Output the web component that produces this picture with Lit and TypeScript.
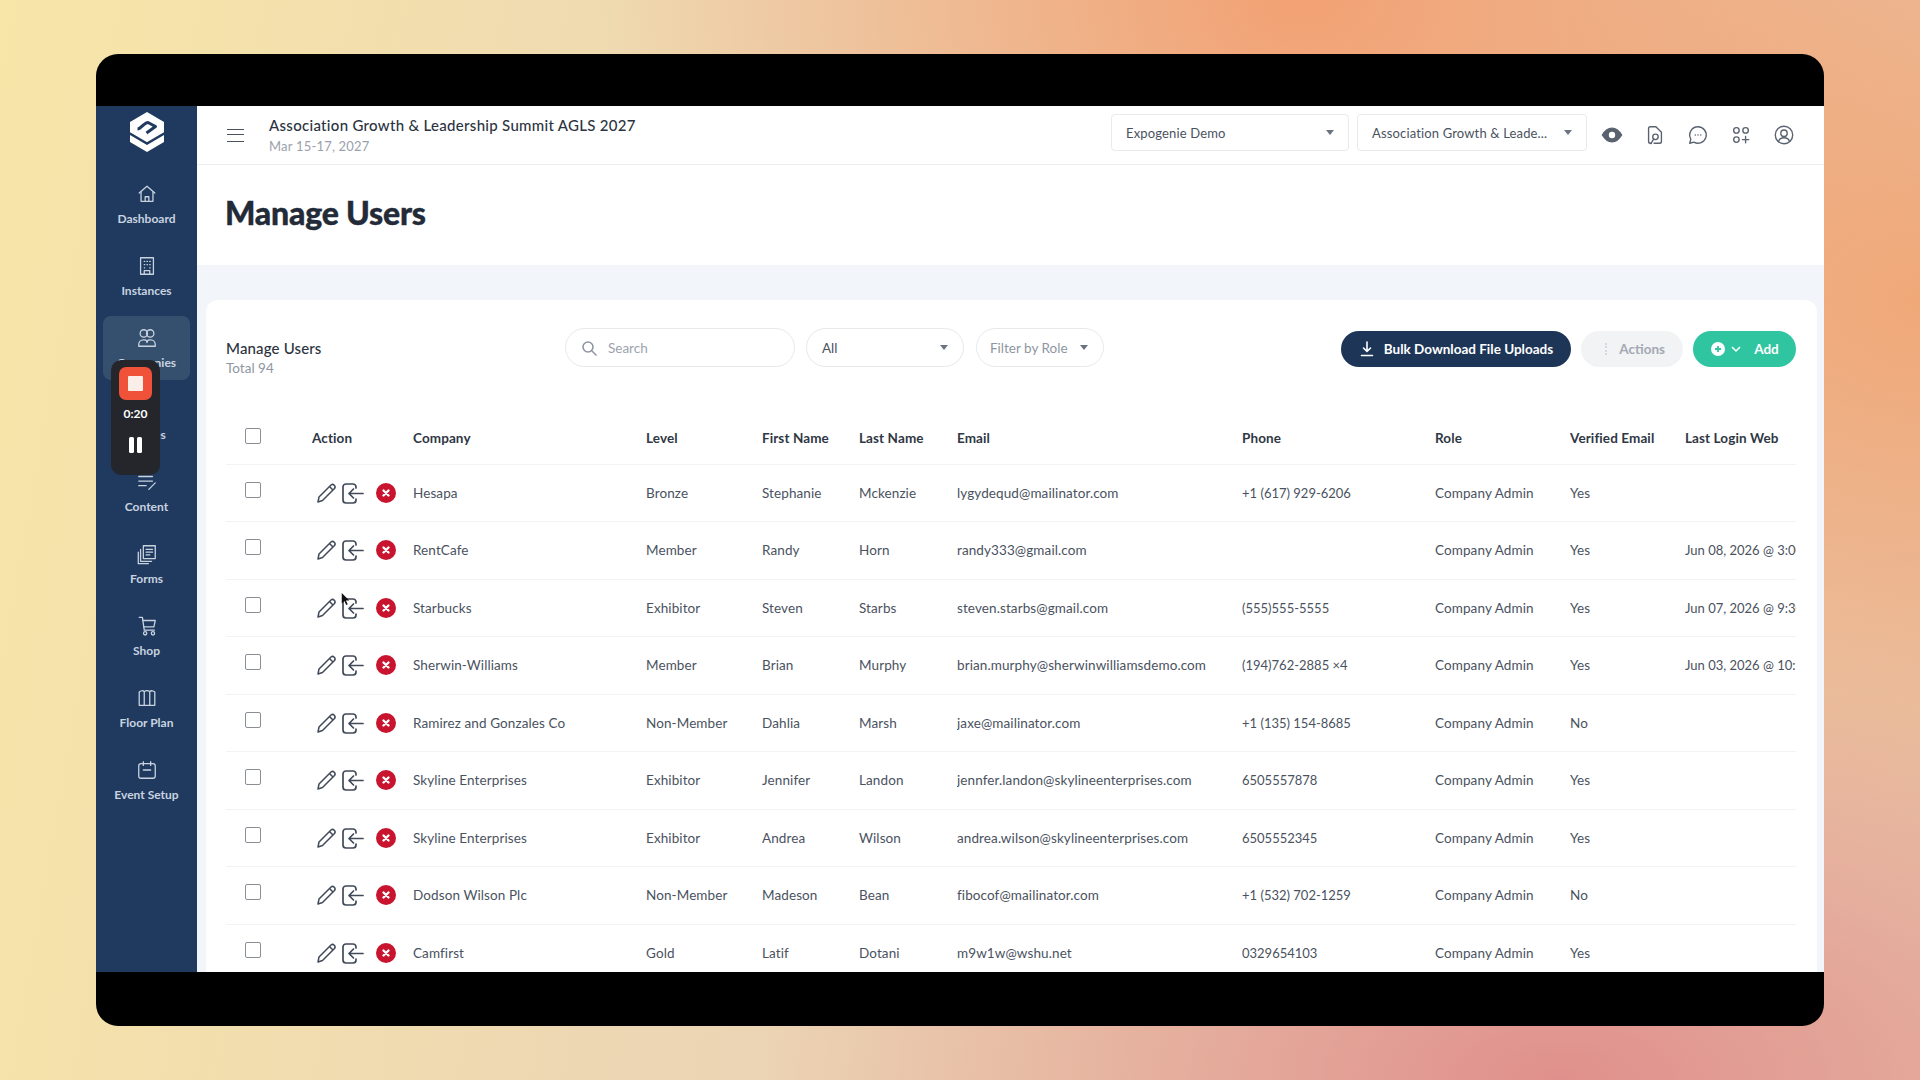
import { LitElement, html, css, svg } from "lit";
import { customElement } from "lit/decorators.js";

const rows = [
  ["Hesapa","Bronze","Stephanie","Mckenzie","lygydequd@mailinator.com","+1 (617) 929-6206","Company Admin","Yes",""],
  ["RentCafe","Member","Randy","Horn","randy333@gmail.com","","Company Admin","Yes","Jun 08, 2026 @ 3:00 PM"],
  ["Starbucks","Exhibitor","Steven","Starbs","steven.starbs@gmail.com","(555)555-5555","Company Admin","Yes","Jun 07, 2026 @ 9:30 AM"],
  ["Sherwin-Williams","Member","Brian","Murphy","brian.murphy@sherwinwilliamsdemo.com","(194)762-2885 ×4","Company Admin","Yes","Jun 03, 2026 @ 10:15 AM"],
  ["Ramirez and Gonzales Co","Non-Member","Dahlia","Marsh","jaxe@mailinator.com","+1 (135) 154-8685","Company Admin","No",""],
  ["Skyline Enterprises","Exhibitor","Jennifer","Landon","jennfer.landon@skylineenterprises.com","6505557878","Company Admin","Yes",""],
  ["Skyline Enterprises","Exhibitor","Andrea","Wilson","andrea.wilson@skylineenterprises.com","6505552345","Company Admin","Yes",""],
  ["Dodson Wilson Plc","Non-Member","Madeson","Bean","fibocof@mailinator.com","+1 (532) 702-1259","Company Admin","No",""],
  ["Camfirst","Gold","Latif","Dotani","m9w1w@wshu.net","0329654103","Company Admin","Yes",""],
];
const heads = ["Company","Level","First Name","Last Name","Email","Phone","Role","Verified Email","Last Login Web"];
const widths = [86,101,233,116,97,98,285,193,135,115,111];

const navIcons: Record<string, unknown> = {
  home: svg`<path d="M3.5 11 12 3.5 20.5 11"/><path d="M5.5 9.5V20h13V9.5"/><path d="M10 20v-5h4v5"/>`,
  building: svg`<path d="M5 3h14v18H5z"/><path d="M9 7h.5M12 7h.5M15 7h.5M9 10.500h.5M12 10.500h.5M15 10.500h.5M9 14h.5M15 14h.5"/><path d="M9 21v-4h6v4"/>`,
  people: svg`<circle cx="8.500" cy="7" r="4"/><circle cx="15.500" cy="7" r="4"/><path d="M3 21v-2a5 5 0 0 1 5-5h1a3 3 0 0 1 3 3 3 3 0 0 1 3-3h1a5 5 0 0 1 5 5v2z"/>`,
  badge: svg`<path d="M4 5h16v14H4z"/><path d="M8 10h8M8 14h8"/>`,
  content: svg`<path d="M3 6h15M3 11h15M3 16h8"/><path d="m14 20 7-7"/>`,
  forms: svg`<path d="M8 3h13v14H8z"/><path d="M11 7h7M11 10h7M11 13h4"/><path d="M5 7v13h12M2.500 10v12.500h11"/>`,
  cart: svg`<path d="M3.500 2.500h3.500L9 16.500h11"/><path d="M7.500 6H21l-1.500 7H8.500"/><circle cx="10" cy="20" r="1.800"/><circle cx="18.500" cy="20" r="1.800"/>`,
  map: svg`<path d="M3.500 5.500C5 4 7.500 3.500 9 5c1.500-1.500 4.500-1.500 6 0 1.500-1.500 4-1 5.500.5V20H3.500z"/><path d="M9 5v15M15 5v15"/>`,
  calendar: svg`<rect x="3" y="5" width="18" height="16" rx="2.500"/><path d="M8 3v4M16 3v4M8 12h8"/>`,
};

const nav: [string, string, boolean?][] = [
  ["home","Dashboard"],["building","Instances"],["people","Companies",true],["badge","Badges"],
  ["content","Content"],["forms","Forms"],["cart","Shop"],["map","Floor Plan"],["calendar","Event Setup"],
];

const caret = html`<svg class="caret" viewBox="0 0 8 5"><path d="M0 0h8L4 5z" fill="currentColor"/></svg>`;

@customElement("app-root")
export class AppRoot extends LitElement {
  static styles = css`
    :host { display: block; width: 1920px; height: 1080px; overflow: hidden; position: relative;
      font-family: "Lato", "Open Sans", sans-serif; color: #2b3340;
      background:
        radial-gradient(700px 480px at 1300px 0px, #f2a173 0%, rgba(242,161,115,0) 100%),
        radial-gradient(800px 420px at 1560px 1080px, #e0908c 0%, rgba(224,144,140,0) 100%),
        radial-gradient(800px 600px at 1920px 300px, #f0a878 0%, rgba(240,168,120,0) 100%),
        linear-gradient(100deg, #f7e6a8 0%, #ecd6b4 40%, #e8c4aa 100%); }
    * { box-sizing: border-box; }
    .window { position: absolute; inset: 54px 96px; background: #000; border-radius: 22px; padding: 52px 0 54px; }
    .app { display: flex; height: 100%; background: #f2f5f9; overflow: hidden; }
    .side { width: 101px; flex: none; background: #1f3a5e; display: flex; flex-direction: column; align-items: center; padding-top: 6px; }
    .logo { width: 34px; height: 40px; margin-bottom: 20px; }
    .nav { width: 87px; height: 64px; margin-bottom: 8px; border-radius: 8px; display: flex; flex-direction: column; align-items: center; justify-content: flex-start; padding-top: 11px; gap: 7px; color: #c9d3e0; font-size: 12px; line-height: 14px; font-weight: 700; white-space: nowrap; }
    .nav.on { background: #35506f; }
    .nav svg { width: 22px; height: 22px; fill: none; stroke: currentColor; stroke-width: 1.400; stroke-linejoin: round; stroke-linecap: round; flex: none; }
    .main { flex: 1; min-width: 0; display: flex; flex-direction: column; }
    .top { height: 59px; background: #fff; border-bottom: 1px solid #eceef1; display: flex; align-items: center; padding: 0 29px 0 30px; flex: none; }
    .burger { width: 17px; height: 13px; border-top: 1.500px solid #4a5260; border-bottom: 1.500px solid #4a5260; position: relative; margin-right: 25px; }
    .burger::after { content: ""; position: absolute; left: 0; right: 0; top: 4px; border-top: 1.500px solid #4a5260; }
    .event { flex: 1; }
    .event b { display: block; font-weight: 500; font-size: 15px; line-height: 20px; color: #2b3340; letter-spacing: .3px; }
    .event span { display: block; font-size: 13px; line-height: 18px; margin-top: 2px; color: #9aa1ac; letter-spacing: .2px; }
    .sel { height: 37px; margin-top: -5px; border: 1px solid #e8eaee; border-radius: 4px; display: flex; align-items: center; justify-content: space-between; font-size: 13px; letter-spacing: .15px; color: #4a5260; padding: 0 14px; background: #fff; }
    .caret { width: 8px; height: 5px; color: #6b7280; flex: none; }
    .s1 { width: 238px; margin-right: 8px; }
    .s2 { width: 230px; margin-right: 14px; }
    .ticons { display: flex; gap: 21px; color: #5a6270; }
    .ticons svg { width: 22px; height: 22px; fill: none; stroke: currentColor; stroke-width: 1.500; stroke-linecap: round; stroke-linejoin: round; display: block; }
    .head { height: 100px; background: #fff; flex: none; padding: 0 28px; display: flex; align-items: center; padding-bottom: 6px; }
    h1 { margin: 0; font-size: 32px; font-weight: 900; color: #232b38; letter-spacing: -.2px; -webkit-text-stroke: .4px #232b38; }
    .card { flex: 1; min-height: 0; margin: 35px 7px 0 9px; background: #fff; border-radius: 12px 12px 0 0; padding: 0 21px 0 20px; overflow: hidden; }
    .bar { display: flex; align-items: center; height: 95px; }
    .ttl { width: 339px; flex: none; padding-top: 20px; }
    .ttl b { display: block; font-weight: 500; font-size: 15px; line-height: 20px; color: #2b3340; letter-spacing: .15px; }
    .ttl span { display: block; font-size: 13.500px; line-height: 20px; color: #8f96a1; }
    .pill { height: 39px; border: 1px solid #e6e8ec; border-radius: 20px; display: flex; align-items: center; font-size: 13.500px; color: #9ca3af; background: #fff; }
    .search { width: 230px; padding-left: 15px; gap: 11px; margin-right: 11px; }
    .search svg { width: 16px; height: 16px; fill: none; stroke: #8f96a1; stroke-width: 1.600; stroke-linecap: round; }
    .all { width: 158px; justify-content: space-between; padding: 0 15px; color: #4a5260; margin-right: 12px; }
    .role { width: 128px; justify-content: space-between; padding: 0 15px 0 13px; color: #8f96a1; }
    .btns { margin-left: auto; display: flex; gap: 10px; padding-top: 3px; }
    .btn { height: 36px; border-radius: 18px; display: flex; align-items: center; font-size: 13.500px; font-weight: 700; color: #fff; white-space: nowrap; }
    .bulk { width: 230px; background: #1d3658; justify-content: center; gap: 9px; }
    .bulk svg { width: 16px; height: 16px; fill: none; stroke: #fff; stroke-width: 1.600; stroke-linecap: round; stroke-linejoin: round; }
    .act { width: 102px; background: #f2f3f5; color: #a3a9b3; justify-content: flex-end; padding-right: 18px; position: relative; }
    .act::before { content: ""; position: absolute; left: 24px; top: 12px; height: 12px; border-left: 2px dotted #d5d8dd; }
    .add { width: 103px; background: #2fc5a0; justify-content: center; gap: 4px; }
    .add svg { fill: none; }
    .add span { margin-left: 8px; }
    table { border-collapse: collapse; table-layout: fixed; width: 1570px; margin-top: 12px; }
    th, td { padding: 0; text-align: left; white-space: nowrap; overflow: hidden; font-size: 13.500px; letter-spacing: .1px; border-bottom: 1px solid #f2f3f5; height: 57.500px; color: #4a5260; font-weight: 400; }
    td:nth-child(8), td:nth-child(11) { font-size: 13px; letter-spacing: 0; }
    th { color: #2f3744; font-weight: 700; height: 57px; padding-top: 6px; font-size: 13.500px; letter-spacing: .1px; }
    .cb { display: block; width: 16px; height: 16px; border: 1.500px solid #8a8f96; border-radius: 2px; margin: -6px 0 0 19px; }
    th .cb { margin-top: -4px; }
    .acts { display: flex; align-items: center; padding-left: 2px; }
    .acts svg { display: block; }
    .rec { position: absolute; left: 111px; top: 360px; width: 49px; height: 115px; background: #24262b; border-radius: 10px; display: flex; flex-direction: column; align-items: center; padding-top: 7px; color: #fff; }
    .stop { width: 33px; height: 33px; border-radius: 7px; background: #ef5238; display: flex; align-items: center; justify-content: center; }
    .stop i { width: 15px; height: 15px; background: #fbeee8; border-radius: 1px; display: block; }
    .time { font-size: 12px; font-weight: 700; margin-top: 6px; line-height: 16px; }
    .pause { display: flex; gap: 3px; margin-top: 15px; }
    .pause i { width: 5px; height: 16px; background: #fff; border-radius: 1.500px; display: block; }
    .cursor { position: absolute; left: 341px; top: 592px; width: 9px; height: 14px; }
  `;

  render() {
    return html`
      <div class="window"><div class="app">
        <aside class="side">
          <svg class="logo" viewBox="0 0 34 40">
            <path fill="#fff" d="M17 0 34 10v20L17 40 0 30V10z"/>
            <path fill="none" stroke="#1f3a5e" stroke-width="2.400" d="M-1 21 17 31.500 35 21"/>
            <path fill="none" stroke="#1f3a5e" stroke-width="3" stroke-linejoin="round" d="M7.500 17c3.500 0 6.500-6.500 10.500-6.500L25.500 14.500 16.500 21"/>
          </svg>
          ${nav.map(([i, l, on]) => html`<div class="nav ${on ? "on" : ""}"><svg viewBox="0 0 24 24">${navIcons[i]}</svg><span>${l}</span></div>`)}
        </aside>
        <div class="main">
          <div class="top">
            <div class="burger"></div>
            <div class="event"><b>Association Growth &amp; Leadership Summit AGLS 2027</b><span>Mar 15-17, 2027</span></div>
            <div class="sel s1"><span>Expogenie Demo</span>${caret}</div>
            <div class="sel s2"><span>Association Growth &amp; Leade...</span>${caret}</div>
            <div class="ticons">
              <svg viewBox="0 0 24 24"><path d="M1.500 12c3-5 6-7.500 10.500-7.500s7.500 2.500 10.500 7.500c-3 5-6 7.500-10.500 7.500S4.500 17 1.500 12z" fill="#5a6270"/><circle cx="12" cy="12" r="3.500" fill="#fff" stroke="none"/></svg>
              <svg viewBox="0 0 24 24"><path d="M8 21H7a2 2 0 0 1-2-2V5a2 2 0 0 1 2-2h6l6 6v10a2 2 0 0 1-2 2h-6"/><circle cx="12.500" cy="14" r="3"/><path d="m10.500 16.500-3 5"/></svg>
              <svg viewBox="0 0 24 24"><path d="M12 3a9 9 0 1 1-4.500 16.800L3 21l1.200-4.500A9 9 0 0 1 12 3z"/><path d="M9 12h.1M12 12h.1M15 12h.1"/></svg>
              <svg viewBox="0 0 24 24"><circle cx="7" cy="7" r="3"/><circle cx="17" cy="7" r="3"/><circle cx="7" cy="17" r="3"/><path d="M17 13.500v7M13.500 17h7"/></svg>
              <svg viewBox="0 0 24 24"><circle cx="12" cy="12" r="9.500"/><circle cx="12" cy="10" r="3.500"/><path d="M6 19c1-3 3-4 6-4s5 1 6 4"/></svg>
            </div>
          </div>
          <div class="head"><h1>Manage Users</h1></div>
          <div class="card">
            <div class="bar">
              <div class="ttl"><b>Manage Users</b><span>Total 94</span></div>
              <div class="pill search"><svg viewBox="0 0 16 16"><circle cx="7" cy="7" r="5"/><path d="m11 11 4 4"/></svg><span>Search</span></div>
              <div class="pill all"><span>All</span>${caret}</div>
              <div class="pill role"><span>Filter by Role</span>${caret}</div>
              <div class="btns">
                <div class="btn bulk"><svg viewBox="0 0 16 16"><path d="M8 1v9M4.500 7 8 10.500 11.500 7M2.500 14.500h11"/></svg>Bulk Download File Uploads</div>
                <div class="btn act">Actions</div>
                <div class="btn add"><svg width="16" height="16" viewBox="0 0 16 16"><circle cx="8" cy="8" r="7" fill="#fff"/><path d="M8 5v6M5 8h6" stroke="#2fc5a0" stroke-width="1.800"/></svg><svg width="12" height="12" viewBox="0 0 12 12"><path d="m2 4 4 4 4-4" stroke="#fff" stroke-width="1.500"/></svg><span>Add</span></div>
              </div>
            </div>
            <table>
              <colgroup>${widths.map((w) => html`<col style="width:${w}px">`)}</colgroup>
              <thead><tr><th><i class="cb"></i></th><th>Action</th>${heads.map((h) => html`<th>${h}</th>`)}</tr></thead>
              <tbody>${rows.map((r) => html`<tr>
                <td><i class="cb"></i></td>
                <td><div class="acts">
                  <svg width="24" height="24" viewBox="0 0 24 24" fill="none" stroke="#414a58" stroke-width="1.500" stroke-linejoin="round"><path d="M4 21l1-5L17 4a2.500 2.500 0 0 1 3.500 3.500L8.500 19.500z"/><path d="M15.500 5.500l3.500 3.500"/></svg>
                  <svg style="margin-left:2px" width="24" height="24" viewBox="0 0 24 24" fill="none" stroke="#414a58" stroke-width="1.700" stroke-linecap="round" stroke-linejoin="round"><path d="M16 7V6a3 3 0 0 0-3-3H6a3 3 0 0 0-3 3v13a3 3 0 0 0 3 3h7a3 3 0 0 0 3-3v-1"/><path d="M23 12.500H9M13.500 8 9 12.500l4.500 4.500"/></svg>
                  <svg style="margin-left:12px" width="20" height="20" viewBox="0 0 20 20"><circle cx="10" cy="10" r="10" fill="#c8142f"/><path d="m7.500 7.500 5 5M12.500 7.500l-5 5" stroke="#fff" stroke-width="2.400" stroke-linecap="round"/></svg>
                </div></td>
                ${r.map((c) => html`<td>${c}</td>`)}
              </tr>`)}</tbody>
            </table>
          </div>
        </div>
      </div></div>
      <div class="rec"><div class="stop"><i></i></div><div class="time">0:20</div><div class="pause"><i></i><i></i></div></div>
      <svg class="cursor" viewBox="0 0 12 18"><path d="M1 1v14l3.500-3.500L7 17l2-1-2.500-5H11z" fill="#111"/></svg>
    `;
  }
}
